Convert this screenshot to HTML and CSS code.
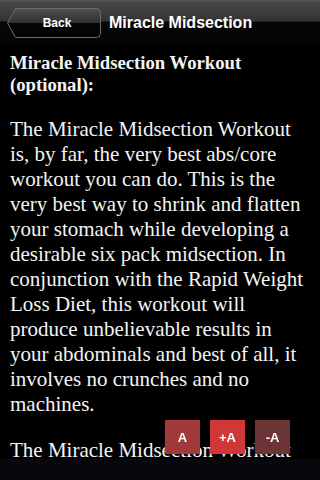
FILE: index.html
```html
<!DOCTYPE html>
<html lang="en">
<head>
  <meta charset="UTF-8">
  <title>Miracle Midsection</title>
  <meta name="viewport" content="width=device-width, initial-scale=1.0">
  <link rel="stylesheet" href="styles.css">
</head>
<body>

<header class="navbar">
  <a class="back" href="#">
    <svg class="back-shape" width="94" height="31" viewBox="0 0 94 31">
      <defs>
        <linearGradient id="backFill" x1="0" y1="0" x2="0" y2="1">
          <stop offset="0" stop-color="#505050"/>
          <stop offset="0.5" stop-color="#2f2f2f"/>
          <stop offset="0.5" stop-color="#060606"/>
          <stop offset="1" stop-color="#020202"/>
        </linearGradient>
      </defs>
      <path d="M8.5 0.5 H89.5 Q93.5 0.5 93.5 4.5 V25.5 Q93.5 29.5 89.5 29.5 H8.5 L0.5 15 Z"
            fill="url(#backFill)" stroke="#6b6b6b" stroke-width="1"/>
    </svg>
    <span class="back-label">Back</span>
  </a>
  <div class="title">Miracle Midsection</div>
</header>

<main class="content">
  <p class="heading">Miracle Midsection Workout (optional):</p>
  <p>The Miracle Midsection Workout is, by far, the very best abs/core workout you can do. This is the very best way to shrink and flatten your stomach while developing a desirable six pack midsection. In conjunction with the Rapid Weight Loss Diet, this workout will produce unbelievable results in your abdominals and best of all, it involves no crunches and no machines.</p>
  <p>The Miracle Midsection Workout</p>
</main>

<footer class="bottombar"></footer>

<div class="font-tools">
  <button class="font-btn reset">A</button>
  <button class="font-btn bigger">+A</button>
  <button class="font-btn smaller">-A</button>
</div>

</body>
</html>
```

FILE: styles.css
```css
* {
  box-sizing: border-box;
}

html, body {
  margin: 0;
  height: 100%;
}

body {
  background: #000;
  color: #f4f4f4;
  font-family: 'Liberation Serif', 'Times New Roman', serif;
  display: flex;
  flex-direction: column;
  overflow: hidden;
}

.navbar {
  flex: 0 0 44px;
  display: flex;
  align-items: center;
  gap: 8px;
  padding-left: 7px;
  background: linear-gradient(to bottom, #5a5a5a 0, #484848 2px, #333 21px, #070707 22px, #030303 44px);
}

.back {
  position: relative;
  width: 94px;
  height: 30px;
  margin-top: 1px;
  display: flex;
  align-items: center;
  justify-content: center;
  padding-left: 6px;
  text-decoration: none;
}

.back-shape {
  position: absolute;
  left: 0;
  top: 0;
}

.back-label {
  position: relative;
  color: #fff;
  font-family: 'Liberation Sans', Arial, sans-serif;
  font-weight: bold;
  font-size: 12px;
}

.title {
  color: #fff;
  font-family: 'Liberation Sans', Arial, sans-serif;
  font-weight: bold;
  font-size: 16px;
  margin-top: 1px;
}

.content {
  flex: 1;
  overflow: hidden;
  padding: 8px 10px 0;
}

.content p {
  margin: 0 0 21px;
  font-size: 21px;
  line-height: 25px;
}

.content .heading {
  font-size: 18.7px;
  line-height: 22px;
  font-weight: bold;
}

.bottombar {
  flex: 0 0 21px;
  background: #08080c;
}

.font-tools {
  position: fixed;
  left: 165px;
  bottom: 26px;
  display: flex;
  gap: 10px;
}

.font-btn {
  width: 35px;
  height: 34px;
  border: none;
  padding: 0;
  color: #fff;
  font-family: 'Liberation Sans', Arial, sans-serif;
  font-weight: bold;
  font-size: 13px;
}

.font-btn.reset {
  background: #a1393b;
}

.font-btn.bigger {
  background: #d13639;
}

.font-btn.smaller {
  background: #6c3434;
}
```
